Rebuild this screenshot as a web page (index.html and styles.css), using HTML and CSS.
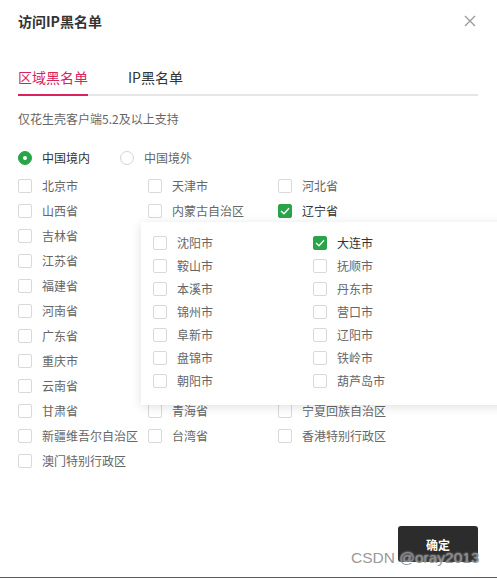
FILE: index.html
```html
<!DOCTYPE html>
<html lang="zh-CN">
<head>
<meta charset="utf-8">
<title>访问IP黑名单</title>
<link rel="stylesheet" href="styles.css">
</head>
<body>
<div class="dialog">
  <div class="header">
    <span class="title">访问IP黑名单</span>
    <svg class="close" width="12" height="12" viewBox="0 0 12 12"><path d="M1 1L11 11M11 1L1 11" stroke="#9a9a9a" stroke-width="1.3" fill="none"/></svg>
  </div>
  <div class="tabs">
    <span class="tab active">区域黑名单</span>
    <span class="tab">IP黑名单</span>
  </div>
  <div class="note">仅花生壳客户端5.2及以上支持</div>
  <div class="radios">
    <label class="radio on"><span class="dot"></span><span class="rlabel">中国境内</span></label>
    <label class="radio"><span class="dot"></span><span class="rlabel">中国境外</span></label>
  </div>
  <div class="grid">
    <div class="item"><span class="box"></span>北京市</div>
    <div class="item"><span class="box"></span>天津市</div>
    <div class="item"><span class="box"></span>河北省</div>
    <div class="item"><span class="box"></span>山西省</div>
    <div class="item"><span class="box"></span>内蒙古自治区</div>
    <div class="item checked"><span class="box"><svg width="10" height="8" viewBox="0 0 10 8"><path d="M1 4L4 6.8L9 1.2" stroke="#fff" stroke-width="1.3" fill="none"/></svg></span>辽宁省</div>
    <div class="item"><span class="box"></span>吉林省</div>
    <div class="item"><span class="box"></span>黑龙江省</div>
    <div class="item"><span class="box"></span>上海市</div>
    <div class="item"><span class="box"></span>江苏省</div>
    <div class="item"><span class="box"></span>浙江省</div>
    <div class="item"><span class="box"></span>安徽省</div>
    <div class="item"><span class="box"></span>福建省</div>
    <div class="item"><span class="box"></span>江西省</div>
    <div class="item"><span class="box"></span>山东省</div>
    <div class="item"><span class="box"></span>河南省</div>
    <div class="item"><span class="box"></span>湖北省</div>
    <div class="item"><span class="box"></span>湖南省</div>
    <div class="item"><span class="box"></span>广东省</div>
    <div class="item"><span class="box"></span>广西壮族自治区</div>
    <div class="item"><span class="box"></span>海南省</div>
    <div class="item"><span class="box"></span>重庆市</div>
    <div class="item"><span class="box"></span>四川省</div>
    <div class="item"><span class="box"></span>贵州省</div>
    <div class="item"><span class="box"></span>云南省</div>
    <div class="item"><span class="box"></span>西藏自治区</div>
    <div class="item"><span class="box"></span>陕西省</div>
    <div class="item"><span class="box"></span>甘肃省</div>
    <div class="item"><span class="box"></span>青海省</div>
    <div class="item"><span class="box"></span>宁夏回族自治区</div>
    <div class="item"><span class="box"></span>新疆维吾尔自治区</div>
    <div class="item"><span class="box"></span>台湾省</div>
    <div class="item"><span class="box"></span>香港特别行政区</div>
    <div class="item"><span class="box"></span>澳门特别行政区</div>
  </div>
  <div class="footer">
    <button class="ok">确定</button>
  </div>
  <div class="popup">
    <div class="pgrid">
      <div class="item"><span class="box"></span>沈阳市</div>
      <div class="item checked"><span class="box"><svg width="10" height="8" viewBox="0 0 10 8"><path d="M1 4L4 6.8L9 1.2" stroke="#fff" stroke-width="1.3" fill="none"/></svg></span>大连市</div>
      <div class="item"><span class="box"></span>鞍山市</div>
      <div class="item"><span class="box"></span>抚顺市</div>
      <div class="item"><span class="box"></span>本溪市</div>
      <div class="item"><span class="box"></span>丹东市</div>
      <div class="item"><span class="box"></span>锦州市</div>
      <div class="item"><span class="box"></span>营口市</div>
      <div class="item"><span class="box"></span>阜新市</div>
      <div class="item"><span class="box"></span>辽阳市</div>
      <div class="item"><span class="box"></span>盘锦市</div>
      <div class="item"><span class="box"></span>铁岭市</div>
      <div class="item"><span class="box"></span>朝阳市</div>
      <div class="item"><span class="box"></span>葫芦岛市</div>
    </div>
  </div>
  <div class="watermark">CSDN @oray2013</div>
</div>
</body>
</html>
```

FILE: styles.css
```css
html, body {
  margin: 0;
  padding: 0;
  background: #fff;
}
body {
  width: 497px;
  height: 579px;
  overflow: hidden;
  font-family: "Noto Sans CJK SC", "Noto Sans", sans-serif;
  color: #666;
}
.dialog {
  position: relative;
  width: 497px;
  height: 578px;
  border-bottom: 1px solid #5a5a5a;
  box-sizing: border-box;
  overflow: hidden;
}
.header {
  display: flex;
  justify-content: space-between;
  align-items: center;
  padding: 11px 21px 0 18px;
  height: 20px;
}
.title {
  font-size: 14px;
  font-weight: bold;
  color: #333;
  line-height: 20px;
}
.close {
  display: block;
}
.tabs {
  display: flex;
  gap: 40px;
  margin: 36px 19px 0 18px;
  border-bottom: 2px solid #e6e6e6;
}
.tab {
  font-size: 14px;
  line-height: 20px;
  padding-bottom: 7px;
  color: #333;
}
.tab.active {
  color: #d7245c;
  border-bottom: 2px solid #d7245c;
  margin-bottom: -2px;
}
.note {
  margin: 14px 18px 0;
  font-size: 12px;
  line-height: 18px;
  color: #666;
}
.radios {
  display: flex;
  margin: 20px 18px 0;
  height: 20px;
}
.radio {
  display: flex;
  align-items: center;
  width: 102px;
  font-size: 12px;
  line-height: 20px;
  color: #666;
}
.radio .dot {
  width: 12px;
  height: 12px;
  border: 1px solid #d4d4d4;
  border-radius: 50%;
  margin-right: 10px;
  box-sizing: content-box;
  position: relative;
}
.radio.on {
  color: #333;
}
.radio.on .dot {
  background: #2aa449;
  border-color: #2aa449;
}
.radio.on .dot::after {
  content: "";
  position: absolute;
  left: 4px;
  top: 4px;
  width: 4px;
  height: 4px;
  border-radius: 50%;
  background: #fff;
}
.grid {
  display: grid;
  grid-template-columns: 130px 130px 130px;
  grid-auto-rows: 25px;
  margin: 5px 18px 0;
}
.item {
  display: flex;
  align-items: center;
  font-size: 12px;
  line-height: 16px;
  color: #666;
  white-space: nowrap;
}
.box {
  width: 12px;
  height: 12px;
  border: 1px solid #d9d9d9;
  border-radius: 2px;
  margin-right: 10px;
  flex: none;
  display: flex;
  align-items: center;
  justify-content: center;
  background: #fff;
}
.item.checked {
  color: #333;
}
.item.checked .box {
  background: #2aa449;
  border-color: #2aa449;
}
.footer {
  display: flex;
  justify-content: flex-end;
  margin: 53px 19px 0 0;
}
.ok {
  width: 80px;
  height: 36px;
  background: #2c2c2c;
  color: #fff;
  border: none;
  border-radius: 3px;
  font-family: "Noto Sans CJK SC", sans-serif;
  font-size: 12px;
  font-weight: bold;
  padding: 0;
}
.popup {
  position: absolute;
  left: 141px;
  top: 222px;
  width: 380px;
  height: 183px;
  background: #fff;
  box-shadow: 0 2px 10px rgba(0, 0, 0, 0.12);
  box-sizing: border-box;
  padding: 9px 0 0 12px;
}
.pgrid {
  display: grid;
  grid-template-columns: 160px 160px;
  grid-auto-rows: 23px;
}
.watermark {
  position: absolute;
  left: 351px;
  top: 548px;
  font-family: "Liberation Sans", "Noto Sans", sans-serif;
  font-size: 15.5px;
  line-height: 20px;
  color: rgba(140, 140, 140, 0.9);
  text-shadow: 0 0 2px rgba(255, 255, 255, 0.8);
}
```
